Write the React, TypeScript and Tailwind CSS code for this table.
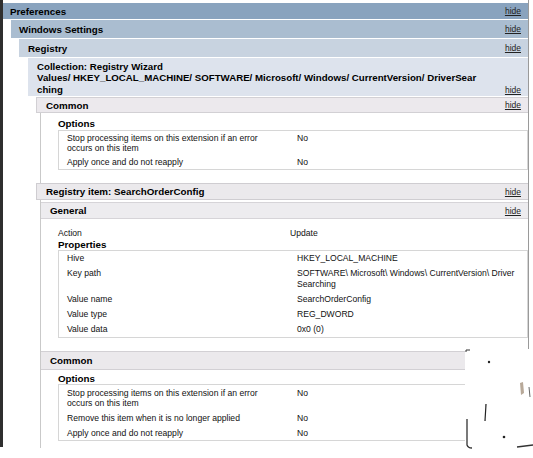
import React from "react";

type Row = { label: React.ReactNode; value: React.ReactNode };

function Hide() {
    return <span className="text-[8.5px] leading-[10px] underline text-[#222]">hide</span>;
}

function Bar({ title, className }: { title: React.ReactNode; className: string }) {
    return (
        <div className={`flex justify-between items-center pr-[7px] ${className}`}>
            <div className="text-[9.8px] leading-[11px] font-bold text-black whitespace-nowrap">{title}</div>
            <Hide />
        </div>
    );
}

function Table({ rows, lead, pad }: { rows: Row[]; lead: string; pad: string }) {
    return (
        <div className="border border-[#d6d6d6]">
            {rows.map((r, i) => (
                <div key={i} className={`grid grid-cols-[238px_1fr] ${lead} ${pad}`}>
                    <div className="pl-[8px] text-[#111]">{r.label}</div>
                    <div className="text-[#111]">{r.value}</div>
                </div>
            ))}
        </div>
    );
}

const stopLabel = (
    <>
        Stop processing items on this extension if an error
        <br />
        occurs on this item
    </>
);

export default function App() {
    return (
        <div className="relative w-[533px] h-[458px] bg-white overflow-hidden flex font-['Liberation_Sans',Arial,sans-serif] text-[8.6px]">
            <div className="w-[3px] h-[447px] bg-[#2f2f2f] shrink-0" />
            <div className="w-[526px] h-[448px] pt-[3px] flex flex-col border-r border-[#9a9a9a]">
                <Bar title="Preferences" className="h-[16px] bg-[#89a3be] pl-[7px]" />
                <Bar title="Windows Settings" className="mt-px ml-[8px] h-[18px] bg-[#aabdd0] pl-[8px]" />
                <Bar title="Registry" className="mt-px ml-[16px] h-[18px] bg-[#c8d3e0] pl-[9px]" />
                <div className="mt-px ml-[25px] h-[38px] bg-[#dde3ed] pl-[9px] pr-[7px] pt-[3px] flex justify-between items-end pb-[1px]">
                    <div className="text-[9.7px] leading-[11.5px] font-bold text-black whitespace-nowrap">
                        Collection: Registry Wizard
                        <br />
                        Values/ HKEY_LOCAL_MACHINE/ SOFTWARE/ Microsoft/ Windows/ CurrentVersion/ DriverSear
                        <br />
                        ching
                    </div>
                    <Hide />
                </div>
                <Bar title="Common" className="mt-px ml-[33px] h-[16px] bg-[#ece9ed] border-y border-l border-[#d2d0d4] pl-[9px]" />
                <div className="ml-[37px] h-[70px] border-l border-[#c9c9c9] pl-[17px] pt-[5px]">
                    <div className="font-bold text-[9.8px] leading-[11px] text-black">Options</div>
                    <div className="mt-px">
                        <Table
                            lead="leading-[10px]"
                            pad="py-[2px]"
                            rows={[
                                { label: stopLabel, value: "No" },
                                { label: "Apply once and do not reapply", value: "No" },
                            ]}
                        />
                    </div>
                </div>
                <Bar title="Registry item: SearchOrderConfig" className="ml-[33px] h-[17px] bg-[#ebe9ec] border-y border-l border-[#cfcdd1] pl-[9px]" />
                <div className="ml-[37px] flex-1 border-l border-[#c9c9c9] flex flex-col">
                    <Bar title="General" className="mt-[2px] h-[17px] bg-[#edecef] border-y border-[#d6d4d8] pl-[9px]" />
                    <div className="pl-[17px] pt-[9px]">
                        <div className="grid grid-cols-[232px_1fr] leading-[11px] text-[#111]">
                            <div>Action</div>
                            <div>Update</div>
                        </div>
                        <div className="font-bold text-[9.8px] leading-[11px] text-black">Properties</div>
                        <Table
                            lead="leading-[11px]"
                            pad="py-[2px]"
                            rows={[
                                { label: "Hive", value: "HKEY_LOCAL_MACHINE" },
                                {
                                    label: "Key path",
                                    value: (
                                        <>
                                            SOFTWARE\ Microsoft\ Windows\ CurrentVersion\ Driver
                                            <br />
                                            Searching
                                        </>
                                    ),
                                },
                                { label: "Value name", value: "SearchOrderConfig" },
                                { label: "Value type", value: "REG_DWORD" },
                                { label: "Value data", value: "0x0 (0)" },
                            ]}
                        />
                    </div>
                    <Bar title="Common" className="mt-[13px] h-[19px] bg-[#ebe9ec] border-y border-[#d2d0d4] pl-[9px]" />
                    <div className="pl-[17px] pt-[3px]">
                        <div className="font-bold text-[9.8px] leading-[11px] text-black">Options</div>
                        <Table
                            lead="leading-[10px]"
                            pad="py-[2.5px]"
                            rows={[
                                { label: stopLabel, value: "No" },
                                { label: "Remove this item when it is no longer applied", value: "No" },
                                { label: "Apply once and do not reapply", value: "No" },
                            ]}
                        />
                    </div>
                </div>
            </div>
            <div className="absolute left-[465px] top-[349px] w-[68px] h-[109px] bg-white">
                <svg width="68" height="109" viewBox="0 0 68 109">
                    <path d="M1 3 L1 1 L5 1" stroke="#333" strokeWidth="1" fill="none" />
                    <circle cx="24" cy="13" r="1.2" fill="#222" />
                    <path d="M21 55 L20 72" stroke="#222" strokeWidth="1.2" fill="none" />
                    <path d="M55 34 L58 33 L59 44 L56 46 Z" fill="#b8a999" />
                    <path d="M64 38 L65 48" stroke="#666" strokeWidth="1" fill="none" />
                    <circle cx="39" cy="88" r="1.3" fill="#222" />
                    <path d="M2 70 L2 96 Q3 99 7 99" stroke="#333" strokeWidth="1.3" fill="none" />
                    <path d="M52 98 L68 96" stroke="#333" strokeWidth="1.5" fill="none" />
                </svg>
            </div>
        </div>
    );
}
